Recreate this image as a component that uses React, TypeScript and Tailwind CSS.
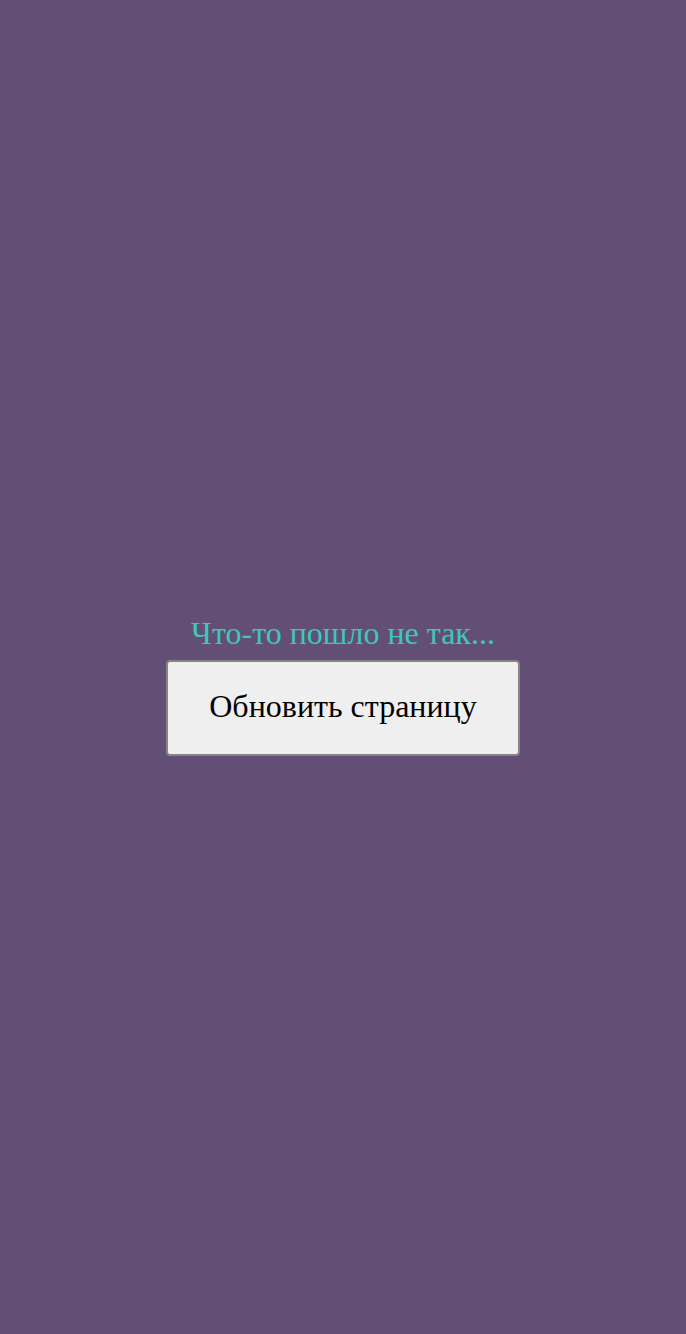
import React from 'react';

export default function App() {
  return (
    <div className="min-h-screen w-full bg-[#634f75] flex flex-col items-center justify-center font-['Liberation_Serif',serif] pt-[37px]">
      <p className="text-[32px] leading-[36px] text-[#3ec8b8]">Что-то пошло не так...</p>
      <button
        onClick={() => window.location.reload()}
        className="mt-[9px] w-[354px] h-[96px] pb-[4px] bg-[#efefef] border-2 border-[#858585] rounded-[4px] text-[32px] text-black"
      >
        Обновить страницу
      </button>
    </div>
  );
}
